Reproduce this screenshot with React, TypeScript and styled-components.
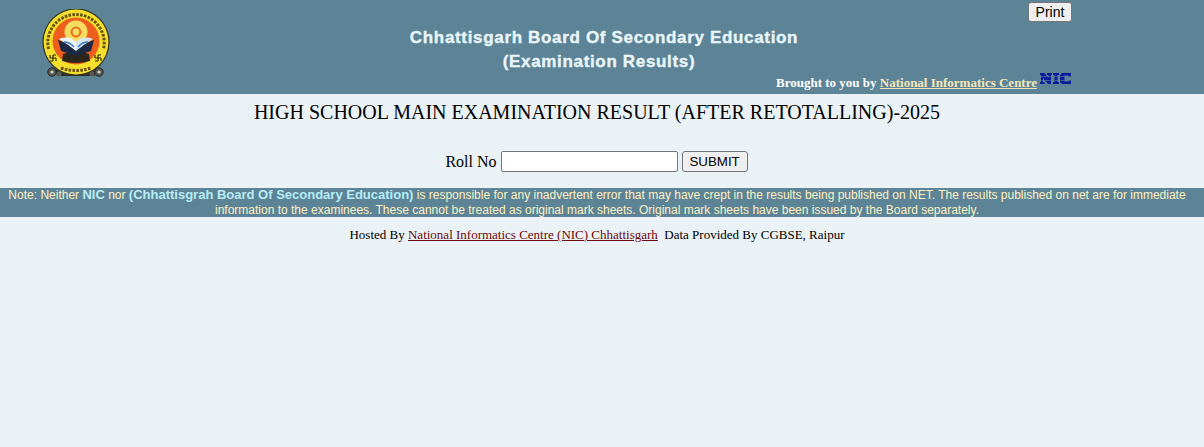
import React from "react";
import styled, { createGlobalStyle } from "styled-components";

const Global = createGlobalStyle`
  html, body { margin: 0; padding: 0; background: #eaf2f5; }
  body { font-family: "Liberation Serif", serif; color: #000; min-height: 447px; }
`;

const HeaderBar = styled.header`
  height: 94px;
  background: #5c8496;
`;

const HeaderInner = styled.div`
  width: 1072px;
  height: 94px;
  display: grid;
  grid-template-columns: 41px 70px 1fr;
`;

const LogoCell = styled.div`
  grid-column: 2;
  padding-top: 9px;
`;

const TitleCell = styled.div`
  grid-column: 3;
  position: relative;
  padding-left: 25px;
`;

const Title = styled.h1`
  margin: 26px 0 0;
  padding: 0;
  text-align: center;
  font: bold 17px/24px "Liberation Sans", sans-serif;
  letter-spacing: 0.67px;
  color: #eaf6fa;
  -webkit-text-stroke: 0.35px #eaf6fa;
`;

const TitleSub = styled.span`
  display: block;
  padding-right: 10px;
`;

const Credit = styled.div`
  position: absolute;
  right: 1px;
  top: 72px;
  display: flex;
  align-items: flex-start;
  gap: 3px;
  font: bold 13px/21px "Liberation Serif", serif;
  color: #fff;
  white-space: nowrap;
`;

const CreditLink = styled.a`
  color: #f3e6b8;
  text-decoration: underline;
`;

const NicSvg = styled.svg`
  margin-top: 1px;
`;

const PrintButton = styled.button`
  position: absolute;
  right: 0;
  top: 2px;
  width: 44px;
  height: 20px;
  padding: 0;
  font: 14px "Liberation Sans", sans-serif;
  color: #000;
  background: #efefef;
  border: 1px solid #767676;
  border-radius: 3px;
`;

const Heading = styled.h2`
  margin: 0;
  padding: 7px 10px 0 0;
  height: 36px;
  box-sizing: content-box;
  text-align: center;
  font: normal 20px/22px "Liberation Serif", serif;
  color: #000;
`;

const Form = styled.form`
  margin-top: 14px;
  display: flex;
  justify-content: center;
  align-items: center;
  gap: 4px;
  height: 21px;
  font: 16px "Liberation Serif", serif;
  padding-right: 11px;
`;

const RollInput = styled.input`
  width: 177px;
  height: 21px;
  box-sizing: border-box;
  padding: 1px 2px;
  margin: 0;
  background: #fff;
  border: 1px solid #767676;
  border-radius: 2px;
`;

const Submit = styled.button`
  width: 66px;
  height: 21px;
  padding: 0;
  font: 13.33px "Liberation Sans", sans-serif;
  color: #000;
  background: #efefef;
  border: 1px solid #767676;
  border-radius: 3px;
`;

const Note = styled.p`
  margin: 16px 0 0;
  padding-right: 10px;
  background: #5c8496;
  height: 29px;
  text-align: center;
  font: 12px/15px "Liberation Sans", sans-serif;
  color: #fdf0c4;
`;

const Highlight = styled.b`
  font-size: 13px;
  line-height: 14px;
  color: #b6ecf6;
`;

const Footer = styled.div`
  margin-top: 10px;
  padding-right: 10px;
  text-align: center;
  font: 13px/15px "Liberation Serif", serif;
  white-space: pre;
`;

const FooterLink = styled.a`
  color: #6e0b0b;
  text-decoration: underline;
`;

const Seal = () => (
  <svg width="70" height="70" viewBox="0 0 70 70" aria-hidden="true">
    <path d="M14 60 Q35 72 56 60 L54 67 H16Z" fill="#2f2f28" />
    <circle cx="35" cy="33" r="33.6" fill="#33301c" />
    <circle cx="35" cy="33" r="32.4" fill="#f4e02c" />
    <circle cx="35" cy="32" r="23.5" fill="#ee5f1e" />
    <path d="M7.5 40 A28.2 28.2 0 1 1 62.5 40" fill="none" stroke="#6b5014" strokeWidth="3" strokeDasharray="2.6 1.3" />
    <path d="M20 59 Q35 64 50 59" fill="none" stroke="#6b5014" strokeWidth="3" strokeDasharray="2.6 1.3" />
    <circle cx="35" cy="23" r="11.5" fill="#f6dd62" />
    <circle cx="35" cy="23" r="4.4" fill="none" stroke="#ea6a1e" strokeWidth="2" />
    <path d="M22 45 Q35 40 48 45 L49 52 Q35 56 21 52Z" fill="#2b261c" />
    <path d="M17 31 L20 42 L35 47 L50 42 L53 31 L35 38Z" fill="#1c2a46" />
    <path d="M18 30 Q28 26 35 33 L35 42 Q28 36 18 30Z" fill="#eef4fa" />
    <path d="M52 30 Q42 26 35 33 L35 42 Q42 36 52 30Z" fill="#d7e6f3" />
    <path d="M23 33 Q29 33 33 38 M47 33 Q41 33 37 38" fill="none" stroke="#3e7fc0" strokeWidth="1.4" />
    <g stroke="#2a2410" strokeWidth="1.1" fill="none">
      <path d="M9 49h6M12 46v6M9 46v3M15 52v-3M12 46h3M12 52h-3" />
      <path d="M54 49h6M57 46v6M54 46v3M60 52v-3M57 46h3M57 52h-3" />
    </g>
    <circle cx="11" cy="63" r="4.2" fill="#5a5a52" stroke="#222" />
    <circle cx="11" cy="63" r="1.6" fill="#cfcfc8" />
    <circle cx="58" cy="63" r="4.2" fill="#5a5a52" stroke="#222" />
    <circle cx="58" cy="63" r="1.6" fill="#cfcfc8" />
    <circle cx="18" cy="65" r="2.5" fill="#5a5a52" />
    <circle cx="51" cy="65" r="2.5" fill="#5a5a52" />
  </svg>
);

const NicMark = () => (
  <NicSvg width="31" height="11" viewBox="0 0 31 11" aria-hidden="true">
    <g fill="#0c1a9e">
      <path d="M0 0h4.5l4 5V2H7V0h5v2h-1v9H8L3 5v4h1.5v2H0V9h1V2H0z" />
      <path d="M13 0h6v2h-1.5v7H19v2h-6V9h1.5V2H13z" />
      <path d="M22 0h9v4h-2.5V2.5h-4v6h4V7H31v4h-9l-2-2V2z" />
    </g>
    <g fill="#5c8496">
      <rect y="3.4" width="31" height="0.6" />
      <rect y="7" width="31" height="0.6" />
    </g>
  </NicSvg>
);

export default function App() {
  return (
    <>
      <Global />
      <HeaderBar>
        <HeaderInner>
          <LogoCell>
            <Seal />
          </LogoCell>
          <TitleCell>
            <PrintButton type="button">Print</PrintButton>
            <Title>
              Chhattisgarh Board Of Secondary Education
              <TitleSub>(Examination Results)</TitleSub>
            </Title>
            <Credit>
              <span>
                Brought to you by <CreditLink href="#">National Informatics Centre</CreditLink>
              </span>
              <NicMark />
            </Credit>
          </TitleCell>
        </HeaderInner>
      </HeaderBar>
      <Heading>HIGH SCHOOL MAIN EXAMINATION RESULT (AFTER RETOTALLING)-2025</Heading>
      <Form onSubmit={(e) => e.preventDefault()}>
        <label htmlFor="roll">Roll No</label>
        <RollInput id="roll" type="text" />
        <Submit type="submit">SUBMIT</Submit>
      </Form>
      <Note>
        Note: Neither <Highlight>NIC</Highlight> nor{" "}
        <Highlight>(Chhattisgrah Board Of Secondary Education)</Highlight> is responsible for any
        inadvertent error that may have crept in the results being published on NET. The results
        published on net are for immediate information to the examinees. These cannot be treated as
        original mark sheets. Original mark sheets have been issued by the Board separately.
      </Note>
      <Footer>
        Hosted By <FooterLink href="#">National Informatics Centre (NIC) Chhattisgarh</FooterLink>
        {"  "}Data Provided By CGBSE, Raipur
      </Footer>
    </>
  );
}
